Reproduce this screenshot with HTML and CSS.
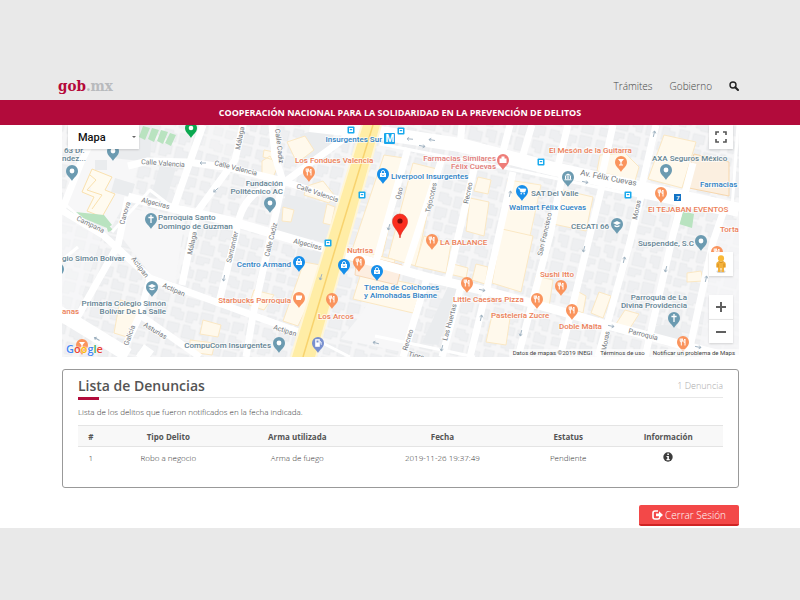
FILE: index.html
```html
<!DOCTYPE html>
<html lang="es">
<head>
<meta charset="utf-8">
<title>Lista de Denuncias - gob.mx</title>
<link rel="stylesheet" href="styles.css">
</head>
<body>
<header class="topbar">
  <a class="logo" href="#">gob<span class="logo-suffix">.mx</span></a>
  <nav class="topnav">
    <a href="#">Trámites</a>
    <a href="#">Gobierno</a>
    <a href="#" class="search" aria-label="Buscar"><svg width="10" height="10" viewBox="0 0 10 10"><circle cx="4" cy="4" r="3" fill="none" stroke="#222" stroke-width="1.4"/><path d="M6.2 6.2 9 9" stroke="#222" stroke-width="2" stroke-linecap="round"/></svg></a>
  </nav>
</header>
<h1 class="banner">COOPERACIÓN NACIONAL PARA LA SOLIDARIDAD EN LA PREVENCIÓN DE DELITOS</h1>
<main class="page">
  <section class="map" aria-label="Mapa">
    <svg class="map-canvas" viewBox="62 125 677 232" preserveAspectRatio="xMidYMid slice">
      <defs>
        <pattern id="lots" width="47" height="43" patternUnits="userSpaceOnUse" patternTransform="rotate(13)">
          <g fill="#eeeff1" stroke="#e6e8ea" stroke-width=".6">
            <path d="M2 2h9v3h4v8H7v-2H2zM18 3h11v7h-4v4h-7zM32 1h12v9h-5v3h-7z"/>
            <path d="M1 17h12v9H9v3H1zM17 17h7v3h6v10H17zM34 16h10v12h-6v-4h-4z"/>
            <path d="M3 32h9v8H3zM15 33h13v5h-5v3h-8zM32 31h5v2h7v8H32z"/>
          </g>
        </pattern>
        <path id="pin" d="M0 10C-1 7-6 5-6 0A6 6 0 1 1 6 0C6 5 1 7 0 10Z"/>
        <g id="place" ><use href="#pin" fill="#6c9bb1"/><circle r="2.4" fill="#fff"/></g>
        <g id="church"><use href="#pin" fill="#6c9bb1"/><path d="M0-4v8M-2.600-1.500h5.200" stroke="#fff" stroke-width="1.300"/></g>
        <g id="school"><use href="#pin" fill="#6c9bb1"/><path d="M-4-1 0-3 4-1 0 1ZM-2.500 1v1.500Q0 4 2.500 2.500V1L0 2Z" fill="#fff"/></g>
        <g id="museum"><use href="#pin" fill="#6c9bb1"/><path d="M-3.500-1.500 0-3.500 3.500-1.500ZM-3-1h1.200v3H-3zM-.6-1H.6v3H-.6zM1.800-1H3v3H1.800zM-3.500 2.300h7v1h-7z" fill="#fff"/></g>
        <g id="food"><use href="#pin" fill="#fa945d"/><path d="M-2.800-3.500V-1Q-2.800 0-1.700 0V3.500M-.6-3.500V-1Q-.6 0-1.700 0V-3.500M2 3.500V-3Q.7-2.500.9.300H2" fill="none" stroke="#fff"/></g>
        <g id="cafe"><use href="#pin" fill="#fa945d"/><path d="M-3-2.500h6v3H2V2h-4Q-3 2-3 .5Z" fill="#fff"/></g>
        <g id="bar"><use href="#pin" fill="#fa945d"/><path d="M-3-3h6L.6 0v2.500H2v1h-4v-1h1.400V0Z" fill="#fff"/></g>
        <g id="shop"><use href="#pin" fill="#158eea"/><path d="M-3-1h6v4h-6z" fill="#fff"/><path d="M-1.600-.5v-1.500q0-1.500 1.600-1.500t1.600 1.500v1.500" fill="none" stroke="#fff" stroke-width=".9"/><path d="M-1.300.8q1.300 1.500 2.600 0" fill="none" stroke="#158eea" stroke-width=".8"/></g>
        <g id="bus"><rect x="-3.500" y="-3.500" width="7" height="7" rx="1" fill="#18a9ed"/><path d="M-2-2h4v4h-4z" fill="#fff"/><path d="M-1.200-1h2.400v1.200h-2.400z" fill="#18a9ed"/></g>
        <path id="arrow" d="M-3 0h6M1-1.600 3 0 1 1.600" fill="none" stroke="#9db0bf" stroke-width=".9"/>
      </defs>
      <path d="M62 125h677v232H62z" fill="#f6f6f7"/>
      <path d="M62 125h677v232H62z" fill="url(#lots)"/>

      <g fill="#f7f7f8">
        <path d="M97 125h35l8 36-12 37-18 32-46-26z"/>
        <path d="M62 214l40 22-28 84-12-6z" fill-opacity=".6"/>
        <path d="M125 207l60 13-10 63-24-8-29-37z"/>
        <path d="M384 277l42 10-20 66-65-14 18-22z"/>
        <path d="M718 220h21v137h-41z" fill-opacity=".7"/>
        <path d="M208 126h32l-9 33-31-8z" fill-opacity=".4"/>
      </g>
      <g fill="#eaecee">
        <path d="M118 125h34l-2 37-38-4z"/><path d="M95 160h12v10H95zM115 178l20 6-4 13-20-5z"/>
        <path d="M160 165l16 3-10 32-15-4zM286 194l60 14-22 34-50-11z"/>
        <path d="M300 134l38-8-12 26-22 8zM298 248l31 6-7 20-28-8zM450 282l10 3-22 60-16-2z"/>
        <path d="M646 330q20-10 35 0l2 8q-20 6-39 0z"/>
      </g>
      <g fill="#fff9ec" stroke="#fbe8c4">
        <path d="M384 155l20 3-22 100-30-8z"/>
        <path d="M413 163l24 6-21 97-28-8z"/>
        <path d="M424 236l27 8-5 29-31-7z"/>
        <path d="M304 262l22 4-28 60-15-5zM350 248l45 12-3 10-45-10zM361 273l61 13-9 27-60-14z"/>
        <path d="M508 180l33 5-16 74-28-7z" stroke="#fcebc9"/>
        <path d="M502 229l31 7-12 56-29-9z"/>
        <path d="M664 135l32 7-14 46-34-9zM563 190l30 7-7 34-33-7z"/>
        <path d="M600 155l25-2 14 14-4 14-38-10z"/>
        <path d="M536 276l17 4-4 27-18-3zM492 315l18 3-4 27-20-3z"/>
        <path d="M453 264l15 4-2 10-17-4zM476 264l12 3-3 17-13-4zM470 198l19 4-5 34-18-5zM478 177l13 3-3 14-14-3z"/>
        <path d="M287 142l18-6 9 14-17 13zM262 161l8-5 7 12-5 12-10-4zM264 150l10 2v8l-11-3z"/>
        <path d="M283 207l11 3-3 12-9-1zM327 204l8 3-4 18-8-2zM254 290l20 5-10 15-15-5zM307 186l16-5 11 14-5 8-25-8z"/>
        <path d="M120 300l21 5-11 33-16-5zM203 320l18 5-3 12-18-3zM190 340l25 3-3 12-22-3z"/>
        <path d="M575 290l11 6-3 17-13-5zM599 292l12 4-8 22-12-5zM625 310l14 4-9 14-14-4zM687 273l14-2 2 10-16 1z"/>
      </g>
      <path d="M92 169l20 8-7 13 10 4-13 23-15-6 7-14-12-5zM90 175l6 5-9 10 15 5-10 14" fill="#fffbf0" stroke="#fae1ae"/>
      <path d="M694 154l35 8v34l-45-9z" fill="#fbefe0" stroke="#f7d7ad"/>
      <path d="M357 254l45 11-5 20-42-10z" fill="#fdeee1" stroke="#f7d9b9"/>
      <g fill="#b9e3c0"><path d="M66 211l38 4 8 10-5 3zM105 221l8 9-5 2zM143 126l7 2-5 12-6-3zM152 128l7 2-5 12-6-3zM161 130l7 2-5 12-6-3zM170 133l6 2-5 11-6-3zM683 211l11 3-2 14-13-4z"/></g>

      <g class="roads">
        <path class="wide" d="M310 125 380 133 460 145 550 168 739 210"/>
        <path class="thin" d="M380 144 520 171 720 213"/>
        <path class="mid" d="M363 125 283 183M128 166 148 161 188 162 230 168 283 181 345 202"/>
        <path class="mid" d="M203 125 173 210M243 125 235 160 197 212 182 285M272 125 275 157 283 181 271 235 253 315 246 357"/>
        <path class="mid" d="M270 186Q240 195 236 235L218 306"/>
        <path class="main" d="M128 197 180 210 230 221 330 250 430 278 490 292 560 311 607 325 660 339 739 360"/>
        <path class="mid" d="M100 125 82 160 62 210M58 208 103 235 150 278 230 307 307 335M128 197 118 245 73 325M150 278 140 315 120 357"/>
        <path class="wide" d="M58 312 128 355M150 357 140 350"/>
        <path class="mid" d="M140 315 200 357"/>
        <path class="thin" d="M66 205 100 235M112 232 150 190 172 207"/>
        <path class="mid" d="M408 148 375 265M442 158 405 272M475 165 448 280M427 278 403 357M462 282 442 357M513 172 487 288 470 357M563 172 550 235 518 357M604 178 590 235 560 357M643 188 630 242 598 357M683 198 673 235 645 357M724 210 713 242 690 347"/>
        <path class="mid" d="M462 125 460 146M510 125 502 155M532 125 522 158M568 125 558 166M613 125 602 175M656 125 642 185M693 163 684 197"/>
        <path class="thin" d="M375 336 475 357M62 260 78 247M307 335 350 357M738 125 732 208"/>
      </g>
      <path d="M363 125h17L315 357h-23z" fill="#fff0ad" stroke="#fff6d8" stroke-width="4"/>
      <path d="M363 125h17L315 357h-23z" fill="#ffeda6"/>
      <path d="M373 125 337 243 303 357" fill="none" stroke="#f8d36e" stroke-width="1.500"/>
      <g>
        <use href="#arrow" transform="translate(203 163) rotate(180)"/><use href="#arrow" transform="translate(216 190) rotate(140)"/><use href="#arrow" transform="translate(410 139) rotate(185)"/><use href="#arrow" transform="translate(422 146) rotate(12)"/><use href="#arrow" transform="translate(432 140) rotate(190)"/><use href="#arrow" transform="translate(389 227) rotate(105)"/><use href="#arrow" transform="translate(510 194) rotate(-77)"/><use href="#arrow" transform="translate(585 182) rotate(12)"/><use href="#arrow" transform="translate(654 134) rotate(-77)"/><use href="#arrow" transform="translate(482 290) rotate(12)"/><use href="#arrow" transform="translate(481 318) rotate(-77)"/><use href="#arrow" transform="translate(521 333) rotate(104)"/><use href="#arrow" transform="translate(442 348) rotate(104)"/><use href="#arrow" transform="translate(584 249) rotate(104)"/><use href="#arrow" transform="translate(624 260) rotate(-77)"/><use href="#arrow" transform="translate(666 269) rotate(104)"/><use href="#arrow" transform="translate(706 279) rotate(-77)"/><use href="#arrow" transform="translate(611 326) rotate(12)"/><use href="#arrow" transform="translate(698 347) rotate(12)"/><use href="#arrow" transform="translate(97 339) rotate(210)"/><use href="#arrow" transform="translate(224 278) rotate(100)"/><use href="#arrow" transform="translate(321 277) rotate(107)"/><use href="#arrow" transform="translate(376 343) rotate(195)"/>
      </g>

      <g class="street">
        <text transform="translate(141 164) rotate(4)">Calle Valencia</text>
        <text transform="translate(214 165) rotate(14)">Calle Valencia</text>
        <text transform="translate(296 188) rotate(19)">Calle Valencia</text>
        <text transform="translate(141 202) rotate(14)">Algeciras</text>
        <text transform="translate(293 243) rotate(14)">Algeciras</text>
        <text transform="translate(76 220) rotate(26)">Campana</text>
        <text transform="translate(124 225) rotate(-74)">Canova</text>
        <text transform="translate(240 150) rotate(-79)">Málaga</text>
        <text transform="translate(275 129) rotate(83)">Calle Cadiz</text>
        <text transform="translate(269 257) rotate(-76)">Calle Cadiz</text>
        <text transform="translate(192 255) rotate(-78)">Málaga</text>
        <text transform="translate(231 263) rotate(-77)">Santander</text>
        <text transform="translate(131 259) rotate(53)">Actipan</text>
        <text transform="translate(162 287) rotate(24)">Actipan</text>
        <text transform="translate(273 329) rotate(18)">Actipan</text>
        <text transform="translate(143 326) rotate(31)">Asturias</text>
        <text transform="translate(128 346) rotate(-70)">Galicia</text>
        <text transform="translate(400 200) rotate(-76)">Oso</text>
        <text transform="translate(430 213) rotate(-77)">Tejocotes</text>
        <text transform="translate(468 204) rotate(-78)">Recreo</text>
        <text transform="translate(407 351) rotate(-73)">Recreo</text>
        <text transform="translate(447 341) rotate(-75)">Las Huertas</text>
        <text transform="translate(542 256) rotate(-77)">San Francisco</text>
        <text transform="translate(637 220) rotate(-78)">Moras</text>
        <text transform="translate(606 351) rotate(-79)">Moras</text>
        <text transform="translate(628 333) rotate(14)">Parroquia</text>
        <text transform="translate(408 356) rotate(14)">Tigre</text>
        <text class="avenue" transform="translate(580 175) rotate(11)">Av. Félix Cuevas</text>
      </g>

      <use href="#place" x="72" y="171"/><use href="#place" x="113" y="151"/><use href="#church" x="151" y="219"/><use href="#place" x="270" y="203"/><use href="#school" x="152" y="287"/><use href="#museum" x="568" y="177"/><use href="#place" x="666" y="170"/><use href="#school" x="617" y="224"/><use href="#church" x="674" y="318"/><use href="#place" x="701" y="241"/><use href="#place" x="279" y="343"/><use href="#place" x="58" y="269"/>
      <use href="#food" x="309" y="172"/><use href="#bar" x="621" y="162"/><use href="#food" x="661" y="193"/><use href="#food" x="432" y="240"/><use href="#food" x="359" y="262"/><use href="#food" x="332" y="299"/><use href="#cafe" x="299" y="298"/><use href="#food" x="467" y="283"/><use href="#food" x="537" y="299"/><use href="#food" x="561" y="286"/><use href="#food" x="572" y="310"/><use href="#food" x="683" y="342"/><use href="#food" x="717" y="252"/><use href="#bar" x="82" y="345"/>
      <use href="#shop" x="383" y="174"/><use href="#shop" x="299" y="262"/><use href="#shop" x="344" y="265"/><use href="#shop" x="377" y="271"/>
      <g transform="translate(522 191)"><use href="#pin" fill="#158eea"/><path d="M-4-3h1.500l1.300 4h4l1-3h-6" fill="#fff" stroke="#fff" stroke-width=".8"/><circle cx="-.8" cy="2.800" r=".8" fill="#fff"/><circle cx="2.200" cy="2.800" r=".8" fill="#fff"/></g>
      <g transform="translate(503 160)"><use href="#pin" fill="#ee7d78"/><path d="M-3.500-1.500h7v4.500h-7zM-1.500-3.500h3v2h-3z" fill="#fff"/></g>
      <g transform="translate(318 343)"><use href="#pin" fill="#7990cf"/><path d="M-2.500-3.500h4V3.500h-4zM2-2l1.200 1V2" fill="#fff" stroke="#fff" stroke-width=".6"/><path d="M-1.500-2.500h2v2h-2z" fill="#7990cf"/></g>
      <g transform="translate(191 128)"><use href="#pin" fill="#0ba850"/><circle r="2.300" fill="#fff"/></g>
      <use href="#bus" x="351" y="130"/><use href="#bus" x="401" y="131"/><use href="#bus" x="362" y="195"/><use href="#bus" x="541" y="162"/><use href="#bus" x="328" y="243"/><use href="#bus" x="628" y="195"/>
      <rect x="384" y="133" width="11" height="11" rx="1" fill="#18a5eb"/><text class="metro" x="390" y="142">M</text>
      <rect x="674" y="194" width="7" height="7" fill="#1473c4"/><text class="route" x="678" y="200">7</text>

      <g class="poi civic">
        <text x="64" y="153">63 Dr.</text><text x="62" y="161">ndez...</text>
        <text x="158" y="220">Parroquia Santo</text><text x="158" y="229">Domingo de Guzman</text>
        <text class="end" x="283" y="186">Fundación</text><text class="end" x="283" y="194">Politécnico AC</text>
        <text x="62" y="261">gio Simón Bolívar</text>
        <text class="end" x="166" y="306">Primaria Colegio Simón</text><text class="end" x="166" y="314">Bolívar De La Salle</text>
        <text class="end" x="271" y="348">CompuCom Insurgentes</text>
        <text x="531" y="196">SAT Del Valle</text><text class="end" x="609" y="229">CECATI 66</text>
        <text x="652" y="161">AXA Seguros México</text><text class="end" x="694" y="246">Suspendde, S.C</text>
        <text class="end" x="687" y="300">Parroquia de La</text><text class="end" x="687" y="308">Divina Providencia</text>
      </g>
      <g class="poi eat">
        <text x="295" y="163">Los Fondues Valencia</text><text x="347" y="253">Nutrisa</text>
        <text class="end" x="291" y="303">Starbucks Parroquia</text><text x="318" y="319">Los Arcos</text>
        <text x="440" y="245">LA BALANCE</text><text x="453" y="302">Little Caesars Pizza</text><text x="491" y="318">Pastelería Zucre</text>
        <text x="540" y="277">Sushi Itto</text><text x="559" y="329">Doble Malta</text>
        <text x="549" y="153">El Mesón de la Guitarra</text><text x="648" y="212">El TEJABAN EVENTOS</text>
        <text x="720" y="232">Torta</text><text x="62" y="314">anas</text>
      </g>
      <g class="poi health"><text class="end" x="496" y="161">Farmacias Similares</text><text class="end" x="496" y="169">Félix Cuevas</text></g>
      <g class="poi store">
        <text class="end" x="382" y="142">Insurgentes Sur</text><text x="391" y="179">Liverpool Insurgentes</text>
        <text x="509" y="210">Walmart Félix Cuevas</text><text class="end" x="291" y="267">Centro Armand</text>
        <text x="364" y="290">Tienda de Colchones</text><text x="364" y="298">y Almohadas Bianne</text><text x="700" y="187">Farmacias</text>
      </g>
      <path d="M400 238C399 230 392.500 228 392.500 221.500A7.500 7.500 0 0 1 407.500 221.500C407.500 228 401 230 400 238Z" fill="#fb2e20" stroke="#d3261a" stroke-width=".6"/><circle cx="400" cy="221" r="2.600" fill="#7c0d0b"/>
    </svg>
    <button class="control map-type" type="button">Mapa<span class="caret"></span></button>
    <button class="control fullscreen" type="button" aria-label="Pantalla completa"><svg width="12" height="12" viewBox="0 0 12 12"><path d="M1 4V1h3M8 1h3v3M11 8v3H8M4 11H1V8" fill="none" stroke="#555" stroke-width="1.600"/></svg></button>
    <div class="side-controls">
      <button class="control" type="button" aria-label="Street View"><svg width="12" height="20" viewBox="0 0 12 20"><ellipse cx="6" cy="17.500" rx="4.500" ry="1.500" fill="#d3d3d3"/><path d="M3.200 7.500h5.600q2 .5 2 2.500v3.500H9V18H6.500v-4h-1v4H3v-4.500H1.200V10q0-2 2-2.500z" fill="#f4b13b"/><circle cx="6" cy="4.400" r="3.100" fill="#f9b938"/><path d="M3.500 7.500Q6 9.500 8.500 7.500M3 9.500v4M9 9.500v4" fill="none" stroke="#c98418" stroke-width=".8"/></svg></button>
      <div class="zoom">
        <button class="control" type="button" aria-label="Acercar"><svg width="12" height="12" viewBox="0 0 12 12"><path d="M1 6h10M6 1v10" stroke="#606060" stroke-width="2"/></svg></button>
        <button class="control" type="button" aria-label="Alejar"><svg width="12" height="12" viewBox="0 0 12 12"><path d="M1 6h10" stroke="#606060" stroke-width="2"/></svg></button>
      </div>
    </div>
    <a class="google" href="#"><span class="g-blue">G</span><span class="g-red">o</span><span class="g-yellow">o</span><span class="g-blue">g</span><span class="g-green">l</span><span class="g-red">e</span></a>
    <div class="credits"><span>Datos de mapas ©2019 INEGI</span><a href="#">Términos de uso</a><a href="#">Notificar un problema de Maps</a></div>
  </section>

  <section class="card">
    <div class="card-head"><h2>Lista de Denuncias</h2><span class="count">1 Denuncia</span></div>
    <p class="intro">Lista de los delitos que fueron notificados en la fecha indicada.</p>
    <table>
      <colgroup><col class="c-num"><col class="c-fifth"><col class="c-fifth"><col class="c-date"><col class="c-status"><col></colgroup>
      <thead><tr><th>#</th><th>Tipo Delito</th><th>Arma utilizada</th><th>Fecha</th><th>Estatus</th><th>Información</th></tr></thead>
      <tbody><tr><td>1</td><td>Robo a negocio</td><td>Arma de fuego</td><td>2019-11-26 19:37:49</td><td>Pendiente</td>
        <td><a class="info" href="#" aria-label="Información"><svg width="10" height="10" viewBox="0 0 10 10"><circle cx="5" cy="5" r="4.700" fill="#3c3c3c"/><path d="M4.300 1.500h1.600V3H4.300zM3.500 4h2.400v3h.8v1.200H3.500V7h.8V5.100h-.8z" fill="#fff"/></svg></a></td></tr></tbody>
    </table>
  </section>
  <div class="actions">
    <button class="logout" type="button"><svg width="11" height="10" viewBox="0 0 11 10"><path d="M6 1H3Q1 1 1 3v4Q1 9 3 9h3Q7.500 9 7.500 7.500" fill="none" stroke="#fff" stroke-width="1.600"/><path d="M4 3.600h3V1.200L11 5 7 8.400V6.200H4z" fill="#fff"/></svg>Cerrar Sesión</button>
  </div>
</main>
</body>
</html>
```
FILE: styles.css
```css
* { box-sizing: border-box; }

body {
  margin: 0;
  background: #e9e9e9;
  color: #545454;
  font-family: "Open Sans", sans-serif;
  font-size: 8px;
}

a { color: inherit; text-decoration: none; }
button { border: 0; padding: 0; cursor: pointer; }

.topbar {
  display: flex;
  align-items: center;
  justify-content: space-between;
  padding: 72px 61px 0 58px;
  height: 100px;
}

.logo {
  color: #b5093a;
  font: bold 15px/28px "DejaVu Serif Condensed", "DejaVu Serif", serif;
}
.logo-suffix { color: #b8babd; }

.topnav {
  display: flex;
  align-items: center;
  gap: 17px;
  font-size: 10px;
  font-weight: 300;
  line-height: 28px;
  color: #444;
}
.search { display: flex; }

.banner {
  margin: 0;
  background: #b20b3b;
  color: #fff;
  font-size: 9px;
  font-weight: 700;
  line-height: 25px;
  text-align: center;
}

.page {
  background: #fff;
  padding: 0 61px 2px 62px;
}

.map {
  position: relative;
  height: 232px;
  overflow: hidden;
}
.map-canvas {
  display: block;
  width: 100%;
  height: 100%;
  font-family: Roboto, sans-serif;
}

.roads path { fill: none; stroke: #fff; stroke-linejoin: round; }
.roads .wide { stroke-width: 14px; }
.roads .main { stroke-width: 9px; }
.roads .mid { stroke-width: 7px; }
.roads .thin { stroke-width: 3px; }

.street, .poi {
  paint-order: stroke;
  stroke: #fff;
  stroke-width: 2px;
  stroke-linejoin: round;
  stroke-opacity: .6;
}
.street { font-size: 7px; fill: #73777b; }
.street .avenue { font-size: 8px; }
.poi { font-size: 8px; font-weight: 500; }
.poi .end { text-anchor: end; }
.civic { fill: #648494; }
.eat { fill: #ec8058; }
.health { fill: #e27c78; }
.store { fill: #2f83c6; }
.metro, .route { fill: #fff; font-weight: 700; text-anchor: middle; }
.metro { font-size: 10px; }
.route { font-size: 6px; }

.control {
  display: flex;
  align-items: center;
  justify-content: center;
  width: 24px;
  height: 24px;
  background: #fff;
  box-shadow: 0 1px 2px rgba(0, 0, 0, .15);
}
.map-type {
  position: absolute;
  top: 0;
  left: 6px;
  width: 71px;
  justify-content: space-between;
  padding: 0 3px 0 10px;
  color: #111;
  font: 500 11px Roboto, sans-serif;
}
.caret {
  border: 2px solid transparent;
  border-top-color: #666;
  border-bottom: 0;
}
.fullscreen { position: absolute; top: 0; right: 6px; }
.side-controls {
  position: absolute;
  right: 6px;
  bottom: 14px;
  display: grid;
  gap: 19px;
}
.zoom .control + .control { border-top: 1px solid #e6e6e6; }

.google {
  position: absolute;
  left: 4px;
  bottom: 1px;
  font: 600 11px/14px "Open Sans", sans-serif;
  text-shadow: 0 0 1px #fff, 0 0 2px #fff;
}
.g-blue { color: #4285f4; }
.g-red { color: #ea4335; }
.g-yellow { color: #fbbc05; }
.g-green { color: #34a853; }

.credits {
  position: absolute;
  right: 0;
  bottom: 0;
  display: flex;
  gap: 8px;
  padding: 0 4px;
  background: rgba(255, 255, 255, .6);
  color: #444;
  font: 6px/8px Roboto, sans-serif;
}

.card {
  margin-top: 12px;
  height: 119px;
  padding: 4px 15px;
  border: 1px solid #999;
  border-radius: 3px;
}
.card-head {
  position: relative;
  display: flex;
  align-items: center;
  justify-content: space-between;
  height: 24px;
  border-bottom: 1px solid #e8e8e8;
}
.card-head::after {
  content: "";
  position: absolute;
  left: 0;
  bottom: -3px;
  width: 21px;
  height: 3px;
  background: #b20b3b;
}
h2 {
  margin: 0;
  font-size: 14px;
  font-weight: 600;
  line-height: 20px;
}
.count { color: #aaa; font-size: 9px; font-weight: 300; }
.intro { margin: 7px 0; font-weight: 300; line-height: 13px; color: #333; }

table {
  width: 100%;
  table-layout: fixed;
  border-collapse: collapse;
  text-align: center;
}
th, td { height: 21px; padding: 0; }
th {
  background: #f8f8f8;
  border-top: 1px solid #e4e4e4;
  border-bottom: 1px solid #e4e4e4;
  font-weight: 700;
}
td { font-weight: 300; color: #333; }
.c-num { width: 4%; }
.c-fifth { width: 20%; }
.c-date { width: 25%; }
.c-status { width: 14%; }
.info { display: flex; justify-content: center; }

.actions { display: flex; justify-content: flex-end; margin-top: 17px; }
.logout {
  display: flex;
  align-items: center;
  justify-content: center;
  gap: 2px;
  width: 100px;
  height: 21px;
  background: #f34848;
  border-bottom: 2px solid #d02424;
  border-radius: 2px;
  color: #fff;
  font: 300 10px "Open Sans", sans-serif;
}
```
